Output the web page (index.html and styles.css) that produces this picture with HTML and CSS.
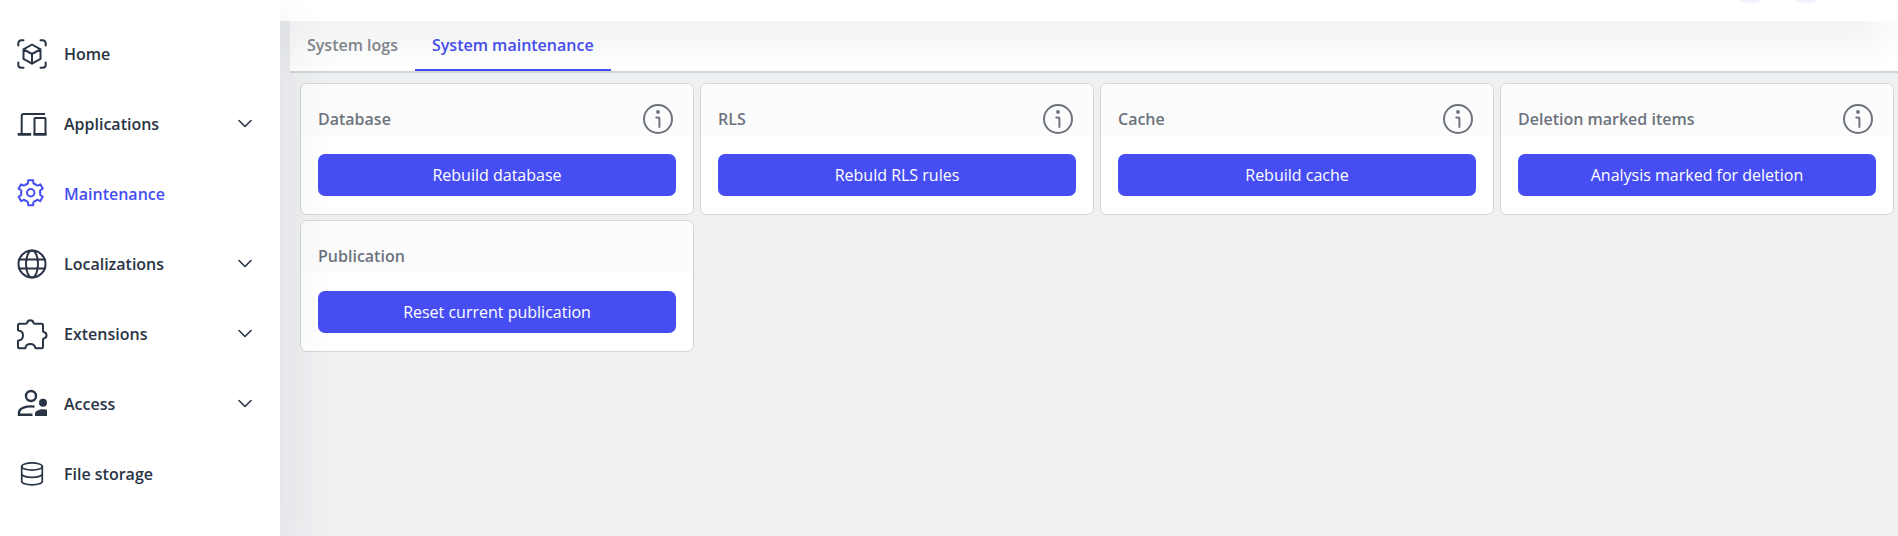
FILE: index.html
```html
<!DOCTYPE html>
<html lang="en">
<head>
<meta charset="utf-8">
<meta name="viewport" content="width=device-width, initial-scale=1">
<title>System maintenance</title>
<link rel="stylesheet" href="styles.css">
</head>
<body>
<svg class="sprite" aria-hidden="true">
  <symbol id="chevron" viewBox="0 0 16 16"><path d="M2 4.500l6 6 6-6"/></symbol>
  <symbol id="info" viewBox="0 0 30 30"><circle cx="15" cy="15" r="14"/><path d="M13.3 13.5h2.2q.9 0 .9.9v8.6"/><circle cx="15" cy="8" r="1.9" fill="currentColor" stroke="none"/></symbol>
</svg>
<div class="app">
  <nav class="sidebar" aria-label="Main">
    <a class="item" href="#home">
      <svg class="icon" viewBox="0 0 32 32"><path d="M2.3 7.5V5.3a3 3 0 0 1 3-3h2.2M24.5 2.3h2.2a3 3 0 0 1 3 3v2.2M29.7 24.5v2.2a3 3 0 0 1-3 3h-2.2M7.5 29.7H5.3a3 3 0 0 1-3-3v-2.2M16 6.5l8.5 4.8v9.6L16 25.7l-8.5-4.8v-9.6zM7.5 11.3L16 16l8.5-4.7M16 16v9.7"/></svg>
      <span class="label">Home</span>
    </a>
    <a class="item" href="#applications">
      <svg class="icon" viewBox="0 0 32 32"><g stroke-linecap="butt"><path d="M29 6H7.700a2 2 0 0 0-2 2V25M18.500 10.700q0-.7.7-.7h9.600q.7 0 .7.7V26H18.500z"/><path d="M1.700 26.300h13.500M17.500 26.300h13" stroke-width="2.700"/></g></svg>
      <span class="label">Applications</span>
      <svg class="chevron"><use href="#chevron"/></svg>
    </a>
    <a class="item active" href="#maintenance" aria-current="page">
      <svg class="icon" viewBox="0 0 32 32">
        <defs><path id="tooth" d="M-4.800-8.300q1.800-.3 2.100-1.300l.2-2.900h5l.2 2.900q.3 1 2.100 1.300"/></defs>
        <g transform="translate(14.700 14.700)"><use href="#tooth"/><use href="#tooth" transform="rotate(60)"/><use href="#tooth" transform="rotate(120)"/><use href="#tooth" transform="rotate(180)"/><use href="#tooth" transform="rotate(240)"/><use href="#tooth" transform="rotate(300)"/><circle r="3.7"/></g>
      </svg>
      <span class="label">Maintenance</span>
    </a>
    <a class="item" href="#localizations">
      <svg class="icon" viewBox="0 0 32 32"><circle cx="16" cy="16" r="13.5"/><ellipse cx="16" cy="16" rx="6" ry="13.5"/><path d="M3.2 11.5h25.6M3.2 20.5h25.6"/></svg>
      <span class="label">Localizations</span>
      <svg class="chevron"><use href="#chevron"/></svg>
    </a>
    <a class="item" href="#extensions">
      <svg class="icon" viewBox="0 0 32 32"><path d="M3.500 5.800h6.200q1.300 0 1.500-1Q11.700 2.300 14.300 2.300T17.400 4.800q.2 1 1.500 1H25.500q1.500 0 1.500 1.500v5.500q0 1.300 1.200 1.500 2.300.5 2.300 3t-2.300 3q-1.200.2-1.200 1.500V28.800q0 1.500-1.500 1.500h-6q-.8-4.300-5.200-4.300t-5 4.300H3.500q-1.500 0-1.500-1.500V22.800q5-.8 5-5.300T2 12.300V7.300q0-1.500 1.500-1.500z"/></svg>
      <span class="label">Extensions</span>
      <svg class="chevron"><use href="#chevron"/></svg>
    </a>
    <a class="item" href="#access">
      <svg class="icon" viewBox="0 0 32 32"><g stroke-width="2.4" stroke-linecap="butt" stroke-linejoin="miter"><circle cx="15" cy="8" r="5"/><path d="M18.500 18.600C10 17.500 3 20.300 3 24.500v2.200h13.500"/></g><g fill="currentColor" stroke="none"><circle cx="27" cy="14.700" r="4"/><path d="M19 28v-2c0-3.200 4-4.700 8-4.700 1.500 0 3 .2 4 .5V28z"/></g></svg>
      <span class="label">Access</span>
      <svg class="chevron"><use href="#chevron"/></svg>
    </a>
    <a class="item" href="#files">
      <svg class="icon" viewBox="0 0 32 32"><g stroke-width="1.700"><ellipse cx="16" cy="8.500" rx="10.300" ry="3.600"/><path d="M5.700 8.500v14.700c0 2 4.600 3.600 10.300 3.600s10.300-1.600 10.300-3.600V8.500M5.700 15.800c0 2 4.600 3.600 10.300 3.600s10.300-1.600 10.300-3.600"/></g></svg>
      <span class="label">File storage</span>
    </a>
  </nav>
  <div class="main">
    <header class="topbar">
      <button class="round" type="button" aria-label="Notifications"></button>
      <button class="round" type="button" aria-label="Account"></button>
    </header>
    <main class="content">
      <div class="tabs" role="tablist">
        <button class="tab" type="button" role="tab" aria-selected="false">System logs</button>
        <button class="tab selected" type="button" role="tab" aria-selected="true">System maintenance</button>
      </div>
      <div class="cards">
        <section class="card">
          <div class="card-head"><h2 class="title">Database</h2><button class="info" type="button" aria-label="About database"><svg><use href="#info"/></svg></button></div>
          <div class="card-body"><button class="action" type="button">Rebuild database</button></div>
        </section>
        <section class="card">
          <div class="card-head"><h2 class="title">RLS</h2><button class="info" type="button" aria-label="About RLS"><svg><use href="#info"/></svg></button></div>
          <div class="card-body"><button class="action" type="button">Rebuld RLS rules</button></div>
        </section>
        <section class="card">
          <div class="card-head"><h2 class="title">Cache</h2><button class="info" type="button" aria-label="About cache"><svg><use href="#info"/></svg></button></div>
          <div class="card-body"><button class="action" type="button">Rebuild cache</button></div>
        </section>
        <section class="card">
          <div class="card-head"><h2 class="title">Deletion marked items</h2><button class="info" type="button" aria-label="About deletion marked items"><svg><use href="#info"/></svg></button></div>
          <div class="card-body"><button class="action" type="button">Analysis marked for deletion</button></div>
        </section>
        <section class="card">
          <div class="card-head"><h2 class="title">Publication</h2></div>
          <div class="card-body"><button class="action" type="button">Reset current publication</button></div>
        </section>
      </div>
    </main>
  </div>
</div>
</body>
</html>
```
FILE: styles.css
```css
* { box-sizing: border-box; }
body {
  margin: 0;
  font-family: "Segoe UI", "Open Sans", "Noto Sans", sans-serif;
  font-size: 16px;
  line-height: 24px;
  color: #293445;
  background: #eff0f2;
}
button { font: inherit; border: 0; padding: 0; background: none; cursor: pointer; }
svg { fill: none; stroke: currentColor; stroke-width: 2; stroke-linecap: round; stroke-linejoin: round; }
.sprite { display: none; }

.app { display: flex; min-height: 100vh; }

.sidebar {
  position: relative;
  z-index: 2;
  flex: 0 0 280px;
  padding-top: 19px;
  background: #fff;
  box-shadow: 8px 24px 48px rgba(41, 56, 69, 0.08);
}
.item {
  display: flex;
  align-items: center;
  height: 70px;
  padding: 0 27px 0 16px;
  color: inherit;
  text-decoration: none;
  font-weight: 600;
}
.item.active { color: #464ef3; }
.icon { width: 32px; height: 32px; margin-right: 16px; flex: none; }
.label { flex: 1; }
.chevron { width: 16px; height: 16px; stroke-width: 1.6; }

.main { flex: 1; min-width: 0; }
.topbar {
  position: relative;
  z-index: 1;
  display: flex;
  justify-content: flex-end;
  align-items: flex-end;
  gap: 8px;
  height: 21px;
  padding: 0 67px 18px 0;
  overflow: hidden;
  background: #fff;
  box-shadow: -16px 12px 40px rgba(41, 56, 69, 0.14);
}
.round { flex: none; width: 48px; height: 48px; border-radius: 50%; background: #f0f0fe; }

.content { padding-left: 10px; }
.tabs { display: flex; background: #fff; border-bottom: 2px solid #d2d5d7; }
.tab {
  height: 50px;
  padding: 0 17px;
  border-bottom: 2px solid transparent;
  color: #83888e;
  font-weight: 600;
}
.tab.selected { color: #464ef3; border-color: #464ef3; }

.cards {
  display: grid;
  grid-template-columns: repeat(4, 1fr);
  gap: 5px 6px;
  padding: 10px 4px 10px 10px;
}
.card { border: 1px solid #d3d5d9; border-radius: 7px; background: #fff; overflow: hidden; }
.card-head {
  display: flex;
  justify-content: space-between;
  align-items: center;
  height: 52px;
  padding: 18px 20px 0 17px;
  background: #fcfcfc;
}
.title { margin: 0; font-size: 16px; font-weight: 600; color: #6c737c; }
.info { display: flex; color: #6c737c; }
.info svg { width: 30px; height: 30px; }
.card-body { padding: 18px 17px; }
.action {
  display: block;
  width: 100%;
  height: 42px;
  border-radius: 7px;
  background: #464ef3;
  color: #fff;
}
```
